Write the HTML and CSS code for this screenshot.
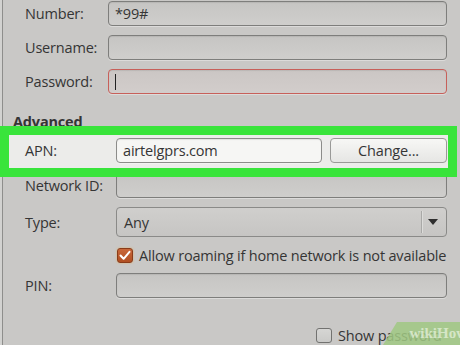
FILE: index.html
```html
<!DOCTYPE html>
<html>
<head>
<meta charset="utf-8">
<link rel="stylesheet" href="styles.css">
</head>
<body>
<div class="frame">
  <div class="form top">
    <div class="lbl">Number:</div>
    <div class="entry">*99#</div>
    <div class="lbl">Username:</div>
    <div class="entry"></div>
    <div class="lbl">Password:</div>
    <div class="entry error"><span class="caret"></span></div>
  </div>
  <div class="section">Advanced</div>
  <div class="hl">
    <div class="apn">
      <div class="lbl">APN:</div>
      <div class="entry light">airtelgprs.com</div>
      <div class="button">Change...</div>
    </div>
  </div>
  <div class="form lower">
    <div class="lbl">Network ID:</div>
    <div class="entry"></div>
    <div class="lbl">Type:</div>
    <div class="combo">
      <span class="combo-text">Any</span>
      <span class="combo-sep"></span>
      <svg class="arrow" width="10" height="6" viewBox="0 0 10 6"><path d="M0 0H10L5 6Z" fill="#2f2f2f"/></svg>
    </div>
    <div class="lbl"></div>
    <div class="check-row">
      <span class="checkbox on"><svg width="12" height="11" viewBox="0 0 12 11"><path d="M1.5 5.5L4.6 8.8L10.5 1.8" fill="none" stroke="#fff" stroke-width="2" stroke-linecap="round" stroke-linejoin="round"/></svg></span>
      <span>Allow roaming if home network is not available</span>
    </div>
    <div class="lbl">PIN:</div>
    <div class="entry"></div>
  </div>
  <div class="show-row">
    <span class="checkbox"></span>
    <span>Show password</span>
  </div>
  <div class="wm"><span>wikiHow</span></div>
</div>
</body>
</html>
```
FILE: styles.css
```css
html, body {
  margin: 0;
  padding: 0;
}
body {
  width: 460px;
  height: 345px;
  overflow: hidden;
  background: #d2d2d0;
  font-family: "Open Sans", "Noto Sans", sans-serif;
  font-size: 14.5px;
  letter-spacing: -0.18px;
  color: #353535;
}
.frame {
  position: relative;
  margin-left: 2px;
  border-left: 1px solid #8e8e8c;
  height: 345px;
  background: #c9c8c6;
  padding-right: 13px;
}
.form {
  display: grid;
  row-gap: 9px;
  align-items: center;
}
.top {
  grid-template-columns: 105px 1fr;
  padding-top: 1px;
}
.lower {
  grid-template-columns: 113px 1fr;
  margin-top: 5px;
}
.lbl {
  padding-left: 22px;
  white-space: nowrap;
}
.entry {
  box-sizing: border-box;
  height: 25px;
  border: 1px solid #7e7e7c;
  border-radius: 4px;
  background: linear-gradient(#c6c5c3, #cfcecc);
  box-shadow: inset 0 1px 1px rgba(0,0,0,0.08), 0 1px 0 rgba(255,255,255,0.35);
  display: flex;
  align-items: center;
  padding-left: 6px;
}
.entry.error {
  border-color: #c7605a;
  background: linear-gradient(#cbc6c4, #d2cdcb);
}
.caret {
  width: 1px;
  height: 16px;
  background: #222;
}
.entry.light {
  background: #f6f6f4;
  border-color: #8c8c8a;
  padding-left: 6px;
}
.section {
  font-weight: bold;
  margin-top: 19px;
  padding-left: 10px;
  line-height: 18px;
}
.hl {
  position: relative;
  margin: 4px -1px 0 6px;
  background: #ececea;
  padding: 3px 1px 5px 0;
}
.hl::after {
  content: "";
  position: absolute;
  left: -9px;
  top: -9px;
  right: -9px;
  bottom: -9px;
  border: 9px solid #39e43b;
  pointer-events: none;
}
.apn {
  display: grid;
  grid-template-columns: 99px 206px 117px;
  column-gap: 8px;
  align-items: center;
}
.apn .lbl {
  padding-left: 16px;
}
.button {
  box-sizing: border-box;
  height: 25px;
  border: 1px solid #9a9a98;
  border-radius: 4px;
  background: linear-gradient(#f7f7f5, #e6e6e4);
  display: flex;
  align-items: center;
  justify-content: center;
}
.combo {
  box-sizing: border-box;
  height: 30px;
  border: 1px solid #8a8a88;
  border-radius: 4px;
  background: linear-gradient(#d0cfcd, #c6c5c3);
  display: flex;
  align-items: center;
  padding-left: 7px;
}
.combo-text {
  flex: 1;
}
.combo-sep {
  width: 1px;
  height: 22px;
  background: #a9a9a7;
  box-shadow: 1px 0 0 #dcdcda;
  margin-right: 6px;
}
.arrow {
  margin-right: 8px;
}
.check-row {
  display: flex;
  align-items: center;
  gap: 6px;
  height: 18px;
  margin-left: 1px;
  white-space: nowrap;
}
.checkbox {
  box-sizing: border-box;
  width: 16px;
  height: 15px;
  border: 1px solid #727270;
  border-radius: 3px;
  background: linear-gradient(#d6d6d4, #cacac8);
  display: flex;
  align-items: center;
  justify-content: center;
  flex: none;
}
.checkbox.on {
  border-color: #8a3c1a;
  background: linear-gradient(#c9683a, #b04f22);
  box-shadow: 0 0 2px rgba(240,170,60,0.7);
}
.show-row {
  display: flex;
  align-items: center;
  gap: 6px;
  margin-top: 28px;
  padding-left: 313px;
  white-space: nowrap;
}
.wm {
  position: absolute;
  right: -13px;
  bottom: 0;
  width: 90px;
  height: 23px;
  background: rgba(160, 200, 130, 0.85);
  clip-path: polygon(14px 0, 100% 0, 100% 100%, 0 100%);
  display: flex;
  align-items: center;
  justify-content: flex-end;
  padding-right: 6px;
  box-sizing: border-box;
}
.wm span {
  font-family: "Liberation Serif", serif;
  font-weight: bold;
  font-size: 15px;
  letter-spacing: 0;
  color: rgba(235, 245, 225, 0.7);
}
```
